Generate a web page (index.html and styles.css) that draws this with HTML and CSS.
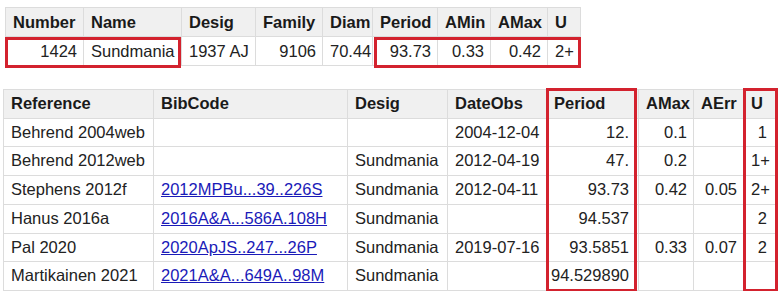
FILE: index.html
```html
<!DOCTYPE html>
<html>
<head>
<meta charset="utf-8">
<link rel="stylesheet" href="styles.css">
</head>
<body>
<div class="wrap wrap-top">
  <table class="grid grid-top">
    <colgroup>
      <col class="w78"><col class="w98"><col class="w74"><col class="w67"><col class="w50"><col class="w65"><col class="w53"><col class="w57"><col class="w33">
    </colgroup>
    <thead>
      <tr><th>Number</th><th>Name</th><th>Desig</th><th>Family</th><th>Diam</th><th>Period</th><th>AMin</th><th>AMax</th><th>U</th></tr>
    </thead>
    <tbody>
      <tr><td class="num">1424</td><td>Sundmania</td><td>1937 AJ</td><td class="num">9106</td><td class="num">70.44</td><td class="num">93.73</td><td class="num">0.33</td><td class="num">0.42</td><td>2+</td></tr>
    </tbody>
  </table>
  <div class="mark mark-a"></div>
  <div class="mark mark-b"></div>
</div>

<div class="wrap wrap-bottom">
  <table class="grid grid-bottom">
    <colgroup>
      <col class="w150"><col class="w194"><col class="w100"><col class="w99"><col class="w92"><col class="w55"><col class="w50"><col class="w32">
    </colgroup>
    <thead>
      <tr><th>Reference</th><th>BibCode</th><th>Desig</th><th>DateObs</th><th>Period</th><th>AMax</th><th>AErr</th><th>U</th></tr>
    </thead>
    <tbody>
      <tr><td>Behrend 2004web</td><td></td><td></td><td>2004-12-04</td><td class="num per">12.</td><td class="num">0.1</td><td></td><td class="num u">1</td></tr>
      <tr><td>Behrend 2012web</td><td></td><td>Sundmania</td><td>2012-04-19</td><td class="num per">47.</td><td class="num">0.2</td><td></td><td class="num u">1+</td></tr>
      <tr><td>Stephens 2012f</td><td><a href="#">2012MPBu...39..226S</a></td><td>Sundmania</td><td>2012-04-11</td><td class="num per">93.73</td><td class="num">0.42</td><td class="num">0.05</td><td class="num u">2+</td></tr>
      <tr><td>Hanus 2016a</td><td><a href="#">2016A&amp;A...586A.108H</a></td><td>Sundmania</td><td></td><td class="num per">94.537</td><td></td><td></td><td class="num u">2</td></tr>
      <tr><td>Pal 2020</td><td><a href="#">2020ApJS..247...26P</a></td><td>Sundmania</td><td>2019-07-16</td><td class="num per">93.5851</td><td class="num">0.33</td><td class="num">0.07</td><td class="num u">2</td></tr>
      <tr><td>Martikainen 2021</td><td><a href="#">2021A&amp;A...649A..98M</a></td><td>Sundmania</td><td></td><td class="num per">94.529890</td><td></td><td></td><td class="num u"></td></tr>
    </tbody>
  </table>
  <div class="mark mark-c"></div>
  <div class="mark mark-d"></div>
</div>
</body>
</html>
```

FILE: styles.css
```css
html, body {
  margin: 0;
  padding: 0;
  background: #ffffff;
}

body {
  font-family: Arial, "Liberation Sans", sans-serif;
  font-size: 16.5px;
  color: #222222;
}

.wrap {
  position: relative;
  display: inline-block;
  vertical-align: top;
}

.wrap-top {
  margin: 7px 0 0 5px;
}

.wrap-bottom {
  display: block;
  width: 772px;
  margin: 23px 0 0 3px;
}

.grid {
  border-collapse: collapse;
  table-layout: fixed;
}

.grid-top { width: 575px; }
.grid-bottom { width: 772px; }

.grid th,
.grid td {
  border: 1px solid #dcdcdc;
  padding: 4px 6px 4px 7px;
  line-height: 20px;
  white-space: nowrap;
  overflow: visible;
  text-align: left;
}

.grid-bottom th,
.grid-bottom td {
  line-height: 19.7px;
}

.grid th {
  background: #f0f0f0;
  font-weight: bold;
  color: #1a1a1a;
}

.grid td.num {
  text-align: right;
}

.grid-bottom td.per {
  padding-right: 9px;
  padding-left: 4px;
}

.grid-bottom td.u {
  padding-right: 8px;
}

.grid a {
  color: #1a1ab8;
  text-decoration: underline;
}

.w78 { width: 78px; }
.w98 { width: 98px; }
.w74 { width: 74px; }
.w67 { width: 67px; }
.w50 { width: 50px; }
.w65 { width: 65px; }
.w53 { width: 53px; }
.w57 { width: 57px; }
.w33 { width: 33px; }
.w150 { width: 150px; }
.w194 { width: 194px; }
.w100 { width: 100px; }
.w99 { width: 99px; }
.w92 { width: 92px; }
.w55 { width: 55px; }
.w32 { width: 32px; }

.mark {
  position: absolute;
  border: 3px solid #d3222e;
  box-sizing: border-box;
  pointer-events: none;
}

.mark-a { left: 0; top: 30px; width: 176px; height: 31px; }
.mark-b { left: 369px; top: 30px; width: 207px; height: 31px; }
.mark-c { left: 543px; top: -1px; width: 91px; height: 204px; }
.mark-d { left: 740px; top: -1px; width: 35px; height: 204px; }
```
